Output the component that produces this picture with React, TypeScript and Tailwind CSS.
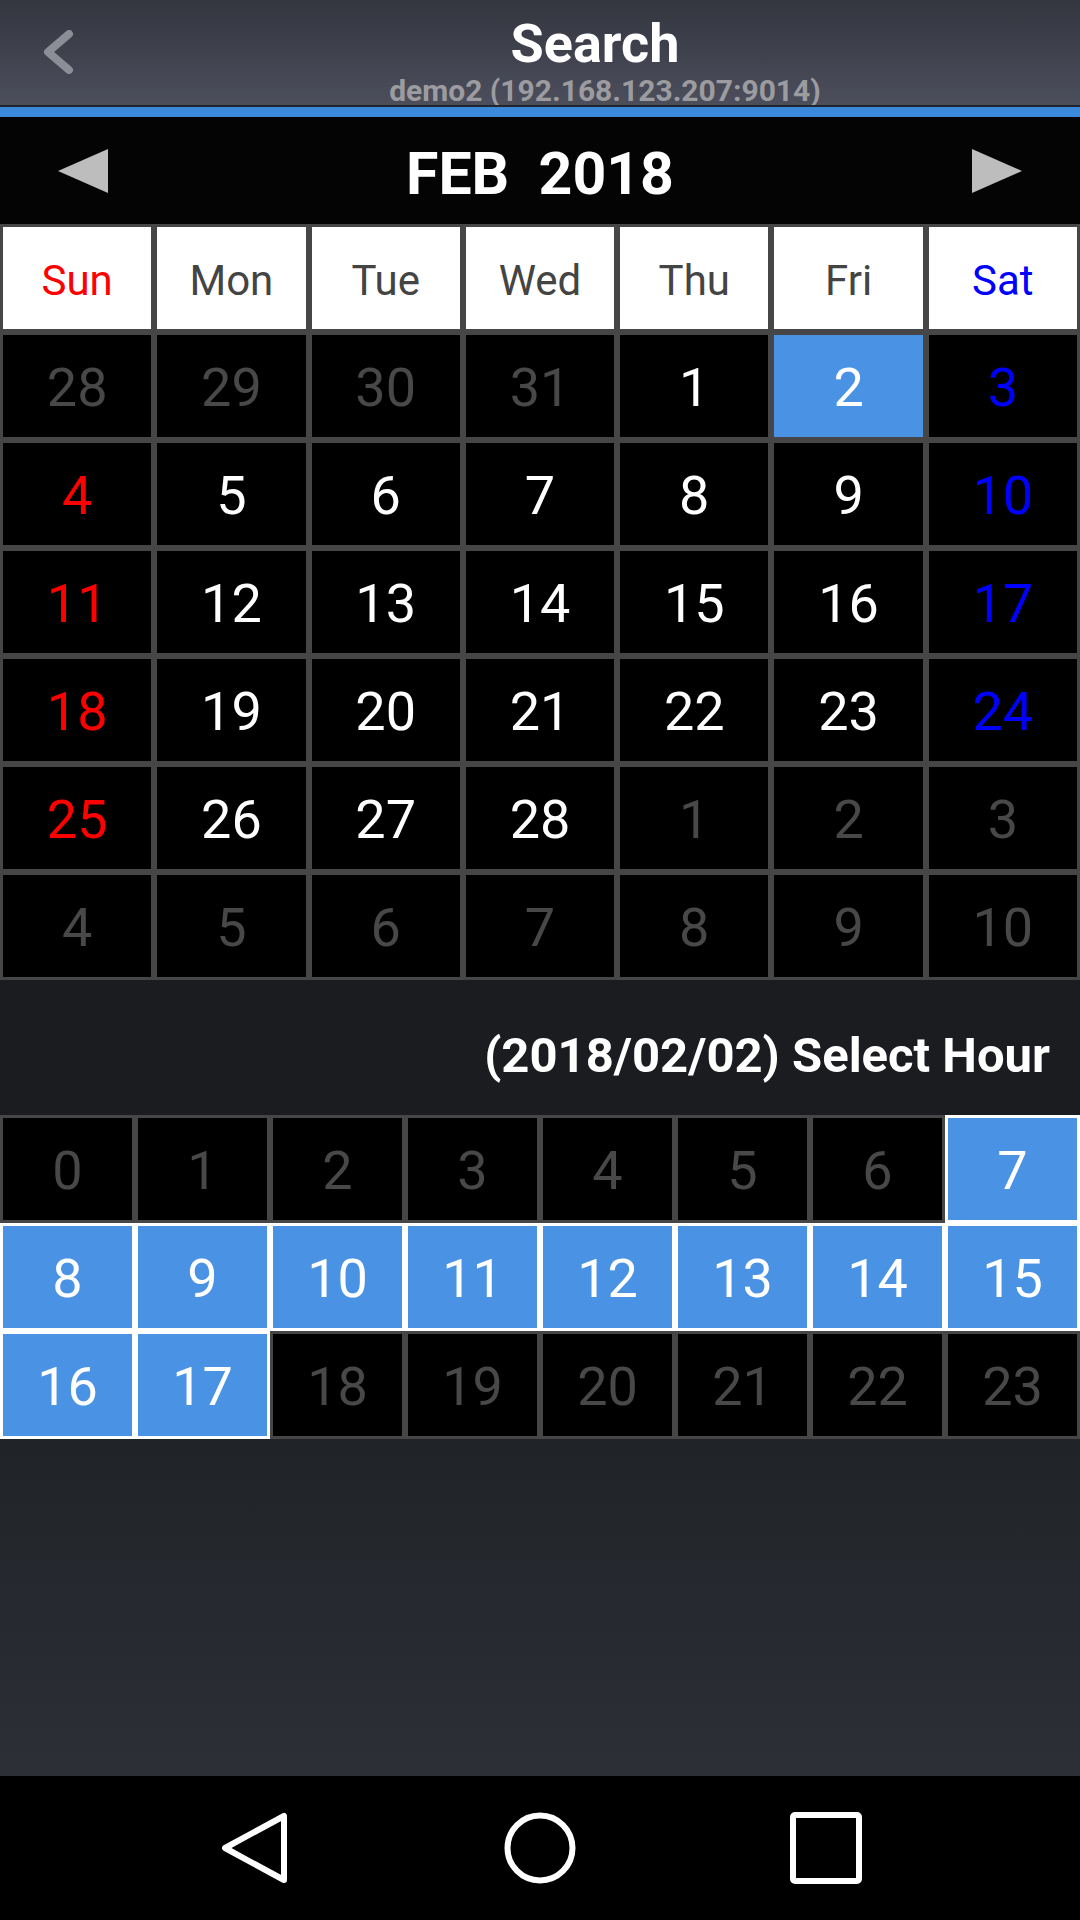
const weekDays = [
  { label: "Sun", color: "text-[#ff0000]" },
  { label: "Mon", color: "text-[#444444]" },
  { label: "Tue", color: "text-[#444444]" },
  { label: "Wed", color: "text-[#444444]" },
  { label: "Thu", color: "text-[#444444]" },
  { label: "Fri", color: "text-[#444444]" },
  { label: "Sat", color: "text-[#0000ff]" },
]

type Day = { n: number; cur: boolean }

const weeks: Day[][] = [
  [28, 29, 30, 31].map((n) => ({ n, cur: false })).concat([1, 2, 3].map((n) => ({ n, cur: true }))),
  [4, 5, 6, 7, 8, 9, 10].map((n) => ({ n, cur: true })),
  [11, 12, 13, 14, 15, 16, 17].map((n) => ({ n, cur: true })),
  [18, 19, 20, 21, 22, 23, 24].map((n) => ({ n, cur: true })),
  [25, 26, 27, 28].map((n) => ({ n, cur: true })).concat([1, 2, 3].map((n) => ({ n, cur: false }))),
  [4, 5, 6, 7, 8, 9, 10].map((n) => ({ n, cur: false })),
]

const hours = Array.from({ length: 24 }, (_, i) => i)

function dayColor(d: Day, col: number) {
  if (!d.cur) return "text-[#484848]"
  if (col === 0) return "text-[#ff0000]"
  if (col === 6) return "text-[#0000ff]"
  return "text-white"
}

export default function App() {
  return (
    <div className="w-[1080px] h-[1920px] flex flex-col bg-black font-['Roboto',sans-serif] overflow-hidden">
      {/* title bar */}
      <div className="h-[105px] grid grid-cols-[110px_1fr] bg-gradient-to-b from-[#33363f] to-[#4c4e5c]">
        <div className="flex items-start pt-[30px] pl-[42px]">
          <svg width="32" height="44" viewBox="0 0 32 44">
            <polyline points="27,4 6,22 27,40" fill="none" stroke="#8b8e97" strokeWidth="8" strokeLinecap="round" strokeLinejoin="round" />
          </svg>
        </div>
        <div className="flex flex-col items-center pt-[17px]">
          <div className="text-[54px] leading-[54px] font-bold text-white">Search</div>
          <div className="mt-[5px] ml-[20px] text-[30px] leading-[30px] font-bold text-[#9c9ca0]">demo2 (192.168.123.207:9014)</div>
        </div>
      </div>
      <div className="h-[2px] bg-[#23252d]" />
      <div className="h-[10px] bg-[#3b89da]" />

      {/* month bar */}
      <div className="h-[107px] flex items-center justify-between px-[58px] bg-[#040404]">
        <svg width="50" height="44" viewBox="0 0 50 44">
          <polygon points="0,22 50,0 50,44" fill="#bdbdbd" />
        </svg>
        <div className="pt-[6px] text-[59px] leading-[59px] font-bold text-white whitespace-pre">FEB  2018</div>
        <svg width="50" height="44" viewBox="0 0 50 44">
          <polygon points="0,0 0,44 50,22" fill="#bdbdbd" />
        </svg>
      </div>

      {/* calendar */}
      <div className="grid grid-cols-7">
        {weekDays.map((w) => (
          <div key={w.label} className={`h-[108px] border-[3px] border-[#464646] bg-white flex items-center justify-center pt-[6px] text-[42px] leading-none ${w.color}`}>
            {w.label}
          </div>
        ))}
        {weeks.map((week, r) =>
          week.map((d, c) => {
            const selected = r === 0 && c === 5
            return (
              <div
                key={`${r}-${c}`}
                className={`h-[108px] border-[3px] border-[#464646] flex items-center justify-center pt-[4px] text-[54px] leading-none ${
                  selected ? "bg-[#4a93e4] text-white" : `bg-black ${dayColor(d, c)}`
                }`}
              >
                {d.n}
              </div>
            )
          })
        )}
      </div>

      {/* hour selection */}
      <div className="h-[135px] flex items-center justify-end pr-[30px] pt-[16px] bg-[#1a1c20]">
        <div className="text-[49px] leading-none font-bold text-white">(2018/02/02) Select Hour</div>
      </div>
      <div className="grid grid-cols-8">
        {hours.map((h) => {
          const on = h >= 7 && h <= 17
          return (
            <div
              key={h}
              className={`h-[108px] border-[3px] flex items-center justify-center pt-[4px] text-[54px] leading-none ${
                on ? "border-white bg-[#4a93e4] text-white" : "border-[#464646] bg-black text-[#484848]"
              }`}
            >
              {h}
            </div>
          )
        })}
      </div>

      <div className="flex-1 bg-gradient-to-b from-[#202327] to-[#2c2f36]" />

      {/* system nav */}
      <div className="h-[144px] flex items-center justify-center gap-[214px] bg-black">
        <svg width="72" height="72" viewBox="0 0 72 72">
          <polygon points="7,36 66,4 66,68" fill="none" stroke="white" strokeWidth="6" strokeLinejoin="round" />
        </svg>
        <svg width="72" height="72" viewBox="0 0 72 72">
          <circle cx="36" cy="36" r="32.5" fill="none" stroke="white" strokeWidth="6" />
        </svg>
        <svg width="72" height="72" viewBox="0 0 72 72">
          <rect x="3" y="3" width="66" height="66" rx="2" fill="none" stroke="white" strokeWidth="6" />
        </svg>
      </div>
    </div>
  )
}
